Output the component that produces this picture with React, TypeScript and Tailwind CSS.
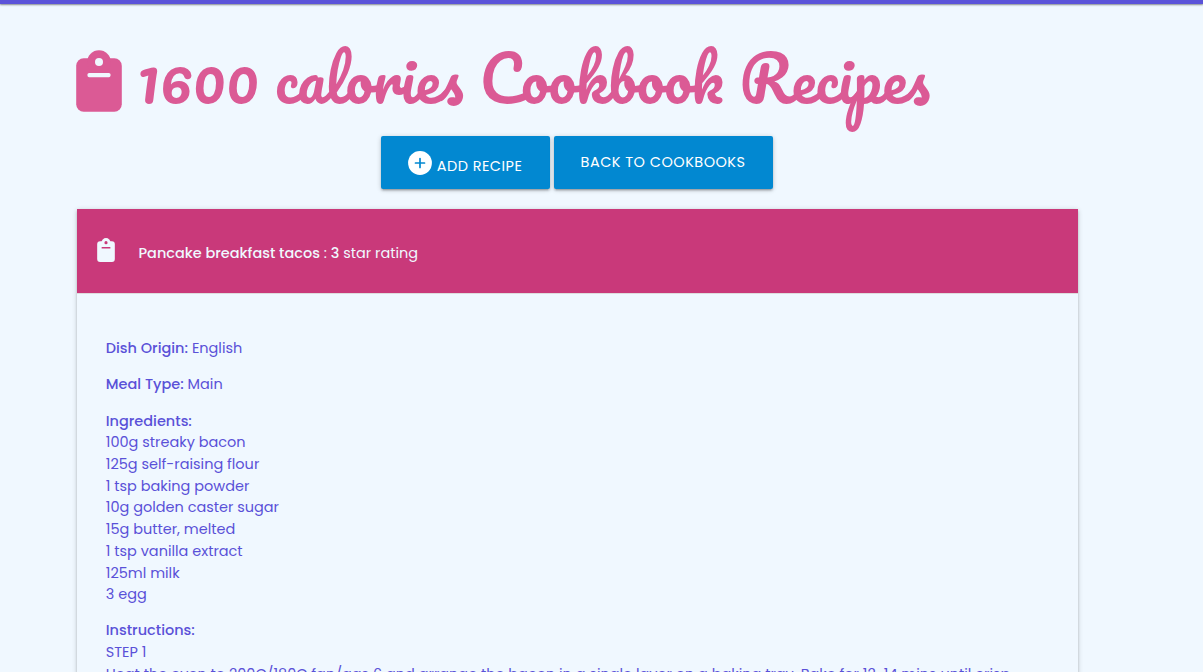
import type { ReactNode } from 'react';

function Clipboard({ className, hole }: { className: string; hole: string }) {
  return (
    <svg viewBox="0 0 46 62" className={className} fill="currentColor" aria-hidden="true">
      <rect x="0.2" y="8.3" width="45.6" height="53.4" rx="7.5" />
      <circle cx="23" cy="12" r="11.8" />
      <circle cx="23" cy="12" r="4" className={hole} />
      <rect x="11.5" y="23" width="23" height="4.2" rx="1.6" className={hole} />
    </svg>
  );
}

function PlusCircle() {
  return (
    <svg viewBox="0 0 24 24" className="mt-[14.3px] h-6 w-6 shrink-0" aria-hidden="true">
      <circle cx="12" cy="12" r="11.9" fill="#fff" />
      <path d="M12 7.5v9M7.5 12h9" stroke="#0288d1" strokeWidth="1.7" strokeLinecap="round" />
    </svg>
  );
}

const buttonStyle =
  'flex h-[52.4px] whitespace-nowrap rounded-[2px] bg-[#0288d1] tracking-[0.48px] text-white shadow-[0_2px_2px_0_rgba(0,0,0,0.14),0_3px_1px_-2px_rgba(0,0,0,0.12),0_1px_5px_0_rgba(0,0,0,0.2)]';

function Label({ children }: { children: ReactNode }) {
  return <span className="font-medium">{children}</span>;
}

const ingredients = [
  '100g streaky bacon',
  '125g self-raising flour',
  '1 tsp baking powder',
  '10g golden caster sugar',
  '15g butter, melted',
  '1 tsp vanilla extract',
  '125ml milk',
  '3 egg',
];

export default function App() {
  return (
    <div className="flex h-[672px] w-full flex-col overflow-hidden bg-[#f0f8ff] font-[Poppins,Inter,sans-serif] text-[14.48px] leading-[21.75px] text-[#5a51d8]">
      <div className="h-1 shrink-0 bg-[#5b53d9] shadow-[0_1px_2px_rgba(0,0,0,0.45)]" />

      <h1 className="flex h-[132.4px] shrink-0 pl-[75.5px] font-[Pacifico,Lato,cursive] text-[#db5a95]">
        <Clipboard className="mt-[46px] h-[62px] w-[46px] shrink-0" hole="fill-[#f0f8ff]" />
        <span className="ml-[15.5px] whitespace-nowrap pt-[30px] text-[60.9px] leading-[90px]">
          1600 calories Cookbook Recipes
        </span>
      </h1>

      <div className="flex shrink-0 gap-1 pl-[381.2px]">
        <button className={`${buttonStyle} w-[168.4px] pl-[27px]`}>
          <PlusCircle />
          <span className="ml-[4.5px] mt-[19.6px]">ADD RECIPE</span>
        </button>
        <button className={`${buttonStyle} w-[219.2px] pl-[27px]`}>
          <span className="mt-[15.6px]">BACK TO COOKBOOKS</span>
        </button>
      </div>

      <main className="ml-[77px] mt-[20.2px] h-[600px] w-[1001px] shrink-0 shadow-[0_2px_2px_0_rgba(0,0,0,0.14),0_3px_1px_-2px_rgba(0,0,0,0.12),0_1px_5px_0_rgba(0,0,0,0.2)]">
        <header className="flex h-[85px] border-b border-[#dddddd] bg-[#c9397a] pl-5 text-[#f0f8ff]">
          <Clipboard className="mt-[29px] h-6 w-[18px]" hole="fill-[#c9397a]" />
          <p className="ml-[23.5px] mt-[34.5px] whitespace-nowrap">
            <Label>Pancake breakfast tacos</Label> : <Label>3</Label> star rating
          </p>
        </header>

        <section className="flex flex-col gap-[14.48px] whitespace-nowrap pl-[28.8px] pt-[44.2px] leading-[21.72px]">
          <p><Label>Dish Origin:</Label> English</p>
          <p><Label>Meal Type:</Label> Main</p>
          <div>
            <Label>Ingredients:</Label>
            <ul>
              {ingredients.map((item) => (
                <li key={item}>{item}</li>
              ))}
            </ul>
          </div>
          <div>
            <Label>Instructions:</Label>
            <p>STEP 1</p>
            <p>
              Heat the oven to 200C/180C fan/gas 6 and arrange the bacon in a single layer on a baking tray. Bake for 12-14 mins until crisp
            </p>
          </div>
        </section>
      </main>
    </div>
  );
}
